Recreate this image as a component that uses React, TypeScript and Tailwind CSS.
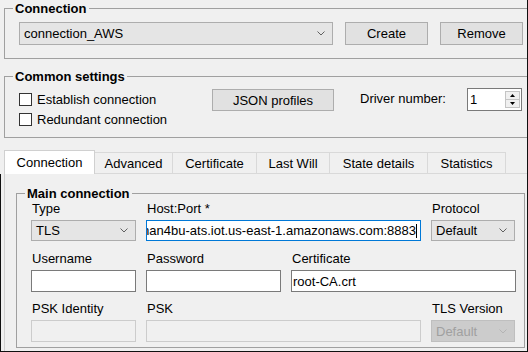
import React from 'react';

const Chevron = ({ color }: { color: string }) => (
  <svg width="8" height="5" viewBox="0 0 8 5" className="shrink-0">
    <path d="M0.5 0.5L4 4L7.5 0.5" fill="none" stroke={color} strokeWidth="1" />
  </svg>
);

function GroupBox({
  title,
  className,
  children,
}: {
  title: string;
  className: string;
  children: React.ReactNode;
}) {
  return (
    <fieldset className={`m-0 p-0 min-w-0 border border-[#a0a0a0] ${className}`}>
      <legend className="ml-[8px] px-[2px] font-bold leading-[17px]">{title}</legend>
      {children}
    </fieldset>
  );
}

function Combo({
  value,
  className,
  disabled,
}: {
  value: string;
  className: string;
  disabled?: boolean;
}) {
  return (
    <div
      className={`flex items-center justify-between border pl-[4px] pr-[7px] ${
        disabled
          ? 'bg-[#cccccc] border-[#bfbfbf] text-[#a0a0a0]'
          : 'bg-[#e5e5e5] border-[#adadad] text-black'
      } ${className}`}
    >
      <span className="leading-[15px] whitespace-nowrap">{value}</span>
      <Chevron color={disabled ? '#b4b4b4' : '#606060'} />
    </div>
  );
}

function Button({ label, className }: { label: string; className: string }) {
  return (
    <div
      className={`flex items-center justify-center border border-[#adadad] bg-[#e1e1e1] leading-[15px] ${className}`}
    >
      {label}
    </div>
  );
}

function CheckRow({ label }: { label: string }) {
  return (
    <div className="flex h-[20px] items-center">
      <div className="h-[13px] w-[13px] border border-[#333333] bg-white" />
      <span className="ml-[5px] leading-[15px]">{label}</span>
    </div>
  );
}

function Field({
  label,
  children,
  className,
}: {
  label: string;
  children: React.ReactNode;
  className: string;
}) {
  return (
    <div className={`flex flex-col ${className}`}>
      <span className="pl-[1px] leading-[13px] whitespace-nowrap">{label}</span>
      <div className="mt-[5px]">{children}</div>
    </div>
  );
}

const tabs = [
  { label: 'Advanced', w: 'w-[78px]' },
  { label: 'Certificate', w: 'w-[84px]' },
  { label: 'Last Will', w: 'w-[73px]' },
  { label: 'State details', w: 'w-[98px]' },
  { label: 'Statistics', w: 'w-[78px]' },
];

export default function App() {
  return (
    <div className="flex h-[352px] w-[528px] flex-col overflow-hidden border-r border-b border-[#101010] bg-[#f0f0f0] font-['Liberation_Sans',Arial,sans-serif] text-[13px] text-black">
      {/* Connection */}
      <GroupBox title="Connection" className="ml-[4px] w-[540px] shrink-0">
        <div className="flex pl-[14px] pt-[5px] pb-[13px]">
          <Combo value="connection_AWS" className="h-[23px] w-[314px]" />
          <Button label="Create" className="ml-[12px] h-[23px] w-[83px]" />
          <Button label="Remove" className="ml-[12px] h-[23px] w-[83px]" />
        </div>
      </GroupBox>

      {/* Common settings */}
      <GroupBox title="Common settings" className="mt-[9px] ml-[4px] w-[540px] shrink-0">
        <div className="flex items-start pl-[14px] pt-[4px] pb-[8px]">
          <div className="flex w-[193px] flex-col">
            <CheckRow label="Establish connection" />
            <CheckRow label="Redundant connection" />
          </div>
          <Button label="JSON profiles" className="h-[22px] w-[122px]" />
          <span className="ml-[26px] leading-[20px]">Driver number:</span>
          <div className="ml-[21px] -mt-[1px] flex h-[23px] w-[55px] items-center border border-[#7a7a7a] bg-white pl-[2px] pr-[1px]">
            <span className="flex-1 leading-[15px]">1</span>
            <div className="flex h-[17px] w-[15px] flex-col border border-[#c4c4c4] bg-[#f0f0f0]">
              <div className="flex flex-1 items-center justify-center border-b border-[#c4c4c4]">
                <svg width="5" height="3" viewBox="0 0 5 3">
                  <path d="M0 3L2.5 0L5 3Z" fill="#000" />
                </svg>
              </div>
              <div className="flex flex-1 items-center justify-center">
                <svg width="5" height="3" viewBox="0 0 5 3">
                  <path d="M0 0L2.5 3L5 0Z" fill="#000" />
                </svg>
              </div>
            </div>
          </div>
        </div>
      </GroupBox>

      {/* Tabs */}
      <div className="mt-[12px] flex h-[24px] shrink-0 items-end pl-[4px]">
        <div className="flex h-[24px] w-[91px] items-center justify-center border-x border-t border-[#d0d0d0] bg-white leading-[15px]">
          Connection
        </div>
        {tabs.map((t) => (
          <div
            key={t.label}
            className={`flex h-[22px] items-center justify-center border-t border-r border-b border-[#d9d9d9] leading-[15px] whitespace-nowrap ${t.w}`}
          >
            {t.label}
          </div>
        ))}
        <div className="h-[22px] flex-1 border-b border-[#d9d9d9]" />
      </div>

      {/* Tab page */}
      <div className="flex flex-1 border-l border-[#101010] pl-[3px]">
        <div className="flex-1 border-l border-[#d0d0d0] pl-[11px] pt-[11px]">
          <GroupBox title="Main connection" className="w-[509px]">
            <div className="flex flex-col pl-[14px] pb-[5px]">
              <div className="flex gap-[10px]">
                <Field label="Type" className="w-[105px]">
                  <Combo value="TLS" className="h-[21px] w-[105px]" />
                </Field>
                <Field label="Host:Port *" className="w-[275px]">
                  <div className="flex h-[21px] w-[275px] items-center justify-end overflow-hidden border border-[#0078d7] bg-white pr-[3px] whitespace-nowrap">
                    <span className="leading-[15px]">man4bu-ats.iot.us-east-1.amazonaws.com:8883</span>
                    <span className="h-[14px] w-px shrink-0 bg-black" />
                  </div>
                </Field>
                <Field label="Protocol" className="w-[84px]">
                  <Combo value="Default" className="h-[21px] w-[84px]" />
                </Field>
              </div>

              <div className="mt-[11px] flex gap-[10px]">
                <Field label="Username" className="w-[105px]">
                  <div className="h-[22px] w-[105px] border border-[#7a7a7a] bg-white" />
                </Field>
                <Field label="Password" className="w-[135px]">
                  <div className="h-[22px] w-[135px] border border-[#7a7a7a] bg-white" />
                </Field>
                <Field label="Certificate" className="w-[225px]">
                  <div className="flex h-[22px] w-[225px] items-center border border-[#7a7a7a] bg-white pl-[1px]">
                    <span className="leading-[15px]">root-CA.crt</span>
                  </div>
                </Field>
              </div>

              <div className="mt-[10px] flex gap-[10px]">
                <Field label="PSK Identity" className="w-[105px]">
                  <div className="h-[22px] w-[105px] border border-[#cccccc] bg-[#f0f0f0]" />
                </Field>
                <Field label="PSK" className="w-[275px]">
                  <div className="h-[22px] w-[275px] border border-[#cccccc] bg-[#f0f0f0]" />
                </Field>
                <Field label="TLS Version" className="w-[84px]">
                  <Combo value="Default" disabled className="h-[22px] w-[84px]" />
                </Field>
              </div>
            </div>
          </GroupBox>
        </div>
      </div>
    </div>
  );
}
